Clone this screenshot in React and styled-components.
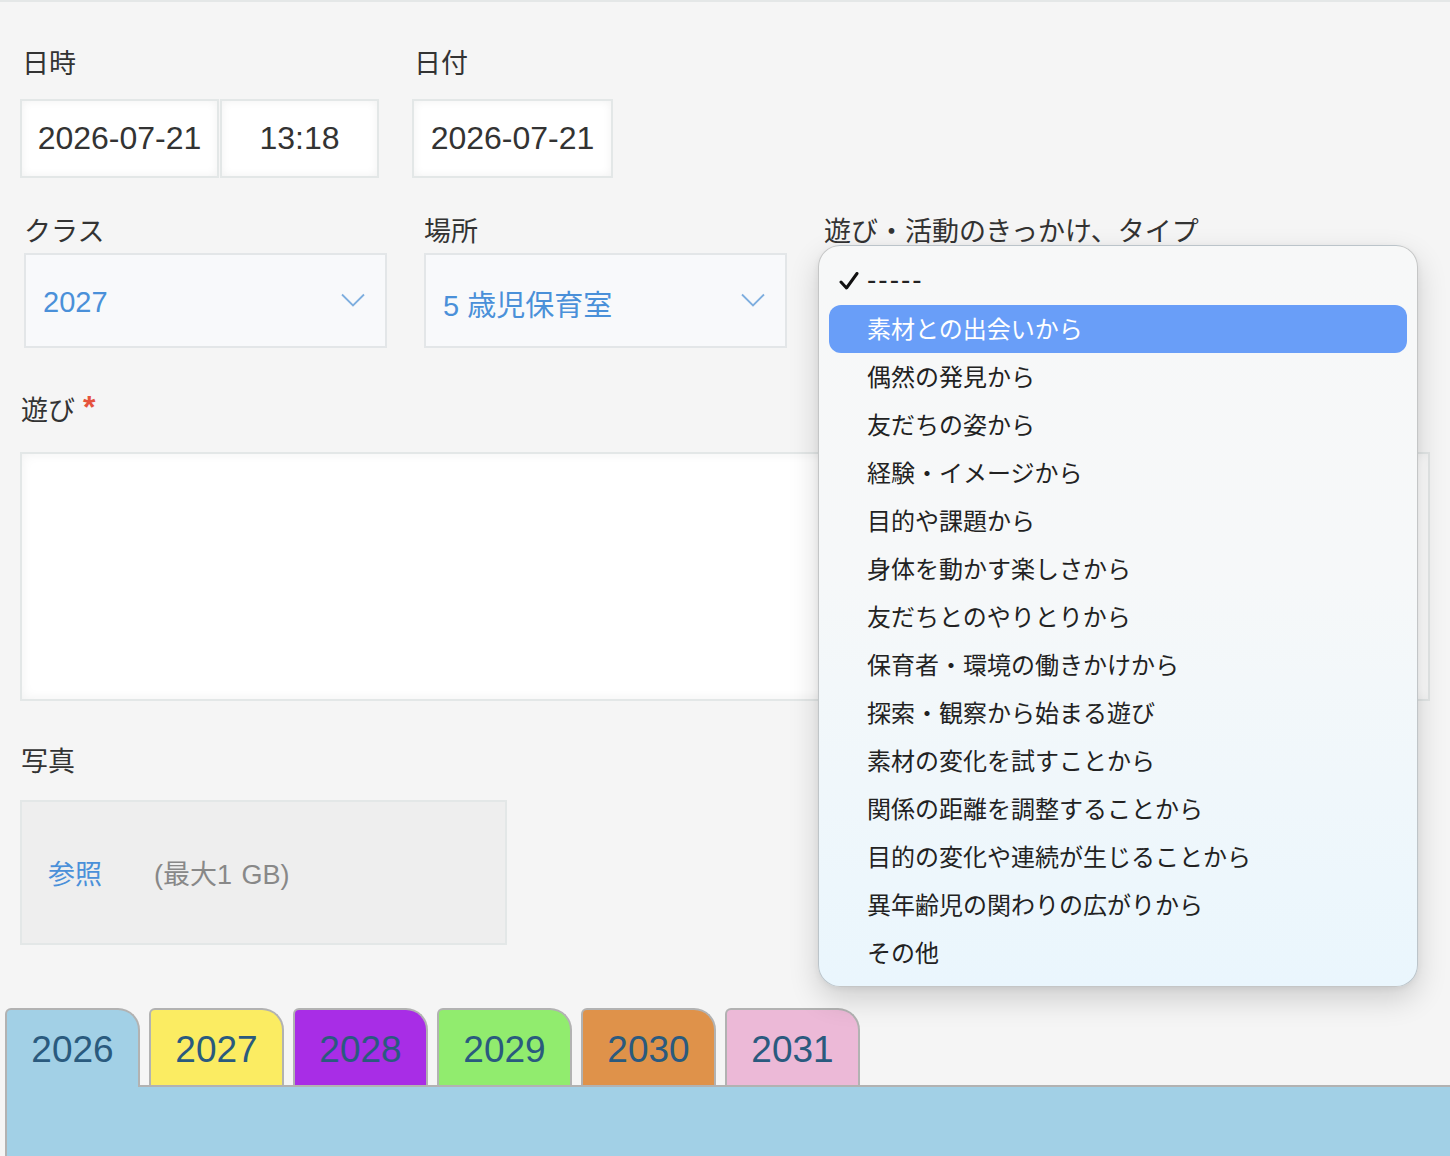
import React from "react"
import styled, { createGlobalStyle } from "styled-components"

const GlobalStyle = createGlobalStyle`
    html, body {
        margin: 0;
        padding: 0;
        background: #f5f5f5;
    }
    body {
        font-family: "Liberation Sans", "Noto Sans CJK JP", sans-serif;
        color: #333;
    }
`

const Page = styled.div`
    position: relative;
    min-height: 1154px;
    border-top: 2px solid #e4e7e7;
    overflow: hidden;
    display: flex;
    flex-direction: column;
`

const Form = styled.div`
    padding: 46px 20px 0;
    display: flex;
    flex-direction: column;
`

const Row = styled.div`
    display: flex;
    gap: ${p => p.gap || 0}px;
    margin-top: ${p => p.top || 0}px;
    padding-left: ${p => p.indent || 0}px;
`

const Field = styled.div`
    display: flex;
    flex-direction: column;
    width: ${p => (p.width ? `${p.width}px` : "auto")};
    flex: ${p => (p.grow ? 1 : "none")};
`

const Label = styled.div`
    font-size: 27px;
    line-height: 32px;
    color: #333;
    white-space: nowrap;
    margin: 0 0 ${p => p.space || 19}px ${p => p.shift ?? 2}px;
    display: flex;
    align-items: flex-start;
    gap: 8px;
`

const Required = styled.span`
    color: #e5533d;
    font-size: 32px;
    line-height: 24px;
    font-weight: bold;
`

const InputPair = styled.div`
    display: flex;
    gap: 1px;
`

const TextBox = styled.div`
    box-sizing: border-box;
    width: ${p => p.width}px;
    height: 79px;
    border: 2px solid #e3e7e7;
    background: #fff;
    box-shadow: inset 0 0 10px rgba(0, 0, 0, 0.06);
    display: flex;
    align-items: center;
    justify-content: center;
    font-size: 32px;
    color: #333;
`

const Select = styled.div`
    box-sizing: border-box;
    height: 95px;
    border: 2px solid #e3e6e8;
    background: #f8f9fb;
    display: flex;
    align-items: center;
    justify-content: space-between;
    padding: 4px 20px 0 17px;
    font-size: 29px;
    color: #4a90d9;
`

const Chevron = () => (
    <svg width="24" height="14" viewBox="0 0 24 14" fill="none" style={{ marginTop: -6 }}>
        <path d="M1 1.5 L12 12.5 L23 1.5" stroke="#7eaedf" strokeWidth="1.8" />
    </svg>
)

const TextArea = styled.div`
    box-sizing: border-box;
    height: 249px;
    border: 2px solid #e3e7e7;
    background: #fff;
    box-shadow: inset 0 0 12px rgba(0, 0, 0, 0.06);
`

const FileBox = styled.div`
    box-sizing: border-box;
    width: 487px;
    height: 145px;
    border: 2px solid #e3e7e7;
    background: #eeeeee;
    display: flex;
    align-items: center;
    gap: 52px;
    padding: 0 0 0 26px;
    font-size: 27px;
`

const Browse = styled.span`
    color: #4a90d9;
`

const Limit = styled.span`
    color: #888;
    word-spacing: 2px;
`

const Tabs = styled.div`
    margin-top: 63px;
    padding-left: 5px;
    display: flex;
    flex-direction: column;
    flex: 1;
`

const TabBar = styled.div`
    display: flex;
    align-items: flex-end;
    gap: 9px;
    height: 77px;
`

const Tab = styled.div`
    position: relative;
    z-index: ${p => (p.active ? 2 : 1)};
    box-sizing: border-box;
    width: 135px;
    height: ${p => (p.active ? 79 : 77)}px;
    margin-bottom: ${p => (p.active ? -2 : 0)}px;
    border: 2px solid #b2b2b2;
    border-bottom: none;
    border-radius: 6px 22px 0 0;
    background: ${p => p.color};
    display: flex;
    align-items: center;
    justify-content: center;
    padding-top: ${p => (p.active ? 2 : 4)}px;
    font-size: 37px;
    color: #2a5a7e;
`

const Panel = styled.div`
    flex: 1;
    min-height: 69px;
    background: #a2d0e6;
    border-top: 2px solid #b2b2b2;
    border-left: 2px solid #b2b2b2;
`

const Menu = styled.div`
    position: absolute;
    left: 818px;
    top: 243px;
    width: 600px;
    box-sizing: border-box;
    padding: 11px 10px 9px;
    border-radius: 22px;
    border: 1px solid rgba(0, 0, 0, 0.2);
    background: linear-gradient(180deg, #f7f8f8 0%, #f6f8f9 45%, #eaf6fd 100%);
    box-shadow: 0 12px 30px rgba(0, 0, 0, 0.16), 0 2px 6px rgba(0, 0, 0, 0.06);
    z-index: 10;
`

const Item = styled.div`
    position: relative;
    box-sizing: border-box;
    height: 48px;
    display: flex;
    align-items: center;
    padding: 0 0 3px 38px;
    border-radius: 12px;
    font-size: 24px;
    color: ${p => (p.selected ? "#fff" : "#222")};
    background: ${p => (p.selected ? "#699ef8" : "transparent")};
`

const Check = styled.svg`
    position: absolute;
    left: 10px;
    top: 15px;
`

const Dashes = styled.span`
    letter-spacing: 2px;
    font-size: 28px;
`

const options = [
    "素材との出会いから",
    "偶然の発見から",
    "友だちの姿から",
    "経験・イメージから",
    "目的や課題から",
    "身体を動かす楽しさから",
    "友だちとのやりとりから",
    "保育者・環境の働きかけから",
    "探索・観察から始まる遊び",
    "素材の変化を試すことから",
    "関係の距離を調整することから",
    "目的の変化や連続が生じることから",
    "異年齢児の関わりの広がりから",
    "その他",
]

const years = [
    { label: "2026", color: "#a2d0e6" },
    { label: "2027", color: "#fbec62" },
    { label: "2028", color: "#a82de6" },
    { label: "2029", color: "#91ec6e" },
    { label: "2030", color: "#df924a" },
    { label: "2031", color: "#ecb9d7" },
]

export default function App() {
    return (
        <>
            <GlobalStyle />
            <Page>
                <Form>
                    <Row gap={33}>
                        <Field>
                            <Label>日時</Label>
                            <InputPair>
                                <TextBox width={199}>2026-07-21</TextBox>
                                <TextBox width={159}>13:18</TextBox>
                            </InputPair>
                        </Field>
                        <Field>
                            <Label>日付</Label>
                            <TextBox width={201}>2026-07-21</TextBox>
                        </Field>
                    </Row>

                    <Row gap={37} top={38} indent={4}>
                        <Field width={363}>
                            <Label space={5} shift={0}>クラス</Label>
                            <Select>2027<Chevron /></Select>
                        </Field>
                        <Field width={363}>
                            <Label space={5} shift={0}>場所</Label>
                            <Select>5 歳児保育室<Chevron /></Select>
                        </Field>
                        <Field width={363}>
                            <Label space={5} shift={0}>遊び・活動のきっかけ、タイプ</Label>
                            <Select />
                        </Field>
                    </Row>

                    <Row top={47}>
                        <Field grow>
                            <Label space={25} shift={1}>遊び<Required>*</Required></Label>
                            <TextArea />
                        </Field>
                    </Row>

                    <Row top={45}>
                        <Field>
                            <Label space={22} shift={1}>写真</Label>
                            <FileBox>
                                <Browse>参照</Browse>
                                <Limit>(最大1 GB)</Limit>
                            </FileBox>
                        </Field>
                    </Row>
                </Form>

                <Tabs>
                    <TabBar>
                        {years.map((y, i) => (
                            <Tab key={y.label} color={y.color} active={i === 0}>
                                {y.label}
                            </Tab>
                        ))}
                    </TabBar>
                    <Panel />
                </Tabs>

                <Menu>
                    <Item>
                        <Check width="20" height="18" viewBox="0 0 20 18" fill="none">
                            <path d="M2 10 L7.5 16 L18 1.5" stroke="#111" strokeWidth="3" strokeLinecap="round" strokeLinejoin="round" />
                        </Check>
                        <Dashes>-----</Dashes>
                    </Item>
                    {options.map((o, i) => (
                        <Item key={o} selected={i === 0}>{o}</Item>
                    ))}
                </Menu>
            </Page>
        </>
    )
}
